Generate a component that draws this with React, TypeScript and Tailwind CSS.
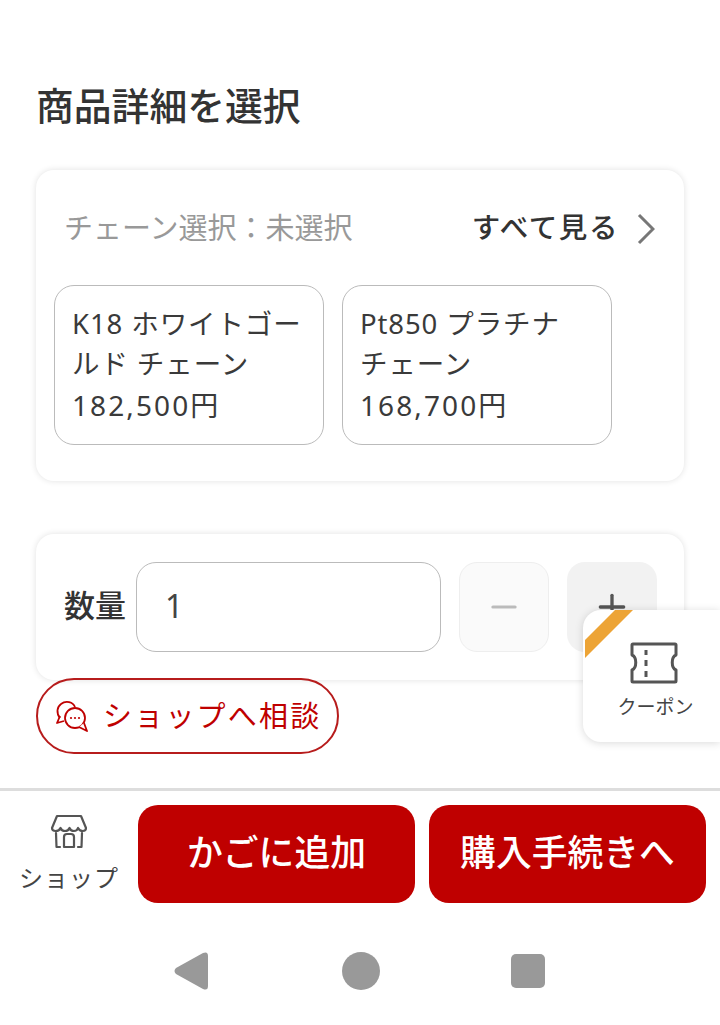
import { Minus, Plus } from "lucide-react";

const chains = [
  { lines: ["K18 ホワイトゴー", "ルド チェーン"], price: "182,500円" },
  { lines: ["Pt850 プラチナ", "チェーン"], price: "168,700円" },
];

function ConsultIcon() {
  return (
    <svg width="34" height="34" viewBox="0 0 34 34" fill="none" stroke="#bf0000" strokeWidth="1.800">
      <path d="M5 19 C1 14 2 8 6 5 C11 1 18 3 20 8" />
      <path d="M5 17 L2 24 L9 22" strokeLinejoin="round" />
      <circle cx="20" cy="19" r="10" fill="#fff" />
      <path d="M24 28 L32 32 L29 24" fill="#fff" strokeLinejoin="round" />
      <g fill="#bf0000" stroke="none">
        <circle cx="16" cy="19" r="1.100" />
        <circle cx="20" cy="19" r="1.100" />
        <circle cx="24" cy="19" r="1.100" />
      </g>
    </svg>
  );
}

function ShopIcon() {
  return (
    <svg width="38" height="38" viewBox="0 0 38 38" fill="none" stroke="#555" strokeWidth="2.200" strokeLinecap="round" strokeLinejoin="round">
      <path d="M7 3 H31 L36 15 C36 19 30 19 28 15 C27 19 21 19 19.500 15 C18 19 12 19 10.500 15 C9 19 2 19 2 15 Z" />
      <path d="M6 20 L6.500 34 H10 M32 20 L31.500 34 H28" />
      <path d="M14 34 V24 Q14 21 17 21 H21 Q24 21 24 24 V34 Z" />
    </svg>
  );
}

function CouponIcon() {
  return (
    <svg width="48" height="42" viewBox="0 0 48 42" fill="none" stroke="#555" strokeWidth="3">
      <path d="M3 2 H45 Q46 2 46 3 V13 C41 15 41 26 46 28 V39 Q46 40 45 40 H3 Q2 40 2 39 V28 C7 26 7 15 2 13 V3 Q2 2 3 2 Z" strokeLinejoin="round" />
      <path d="M16 8 V13 M16 18 V24 M16 29 V35" />
    </svg>
  );
}

export default function App() {
  return (
    <div className="relative flex h-[1025px] w-[720px] flex-col overflow-hidden bg-white font-['Roboto','Noto_Sans_CJK_JP',sans-serif] text-[#333]">
      <h1 className="mt-[79px] pl-[36px] text-[37.800px] leading-[56px] font-medium">商品詳細を選択</h1>

      <section className="mx-9 mt-[35px] h-[311px] rounded-[18px] bg-white shadow-[0_0_6px_rgba(0,0,0,0.12)]">
        <div className="flex items-center justify-between pt-[37px] pr-[29px] pl-[28px]">
          <span className="text-[29px] leading-[44px] text-[#999]">チェーン選択：未選択</span>
          <span className="flex items-center gap-[18px] text-[28.500px] leading-[44px] font-medium tracking-[1.600px]">
            すべて見る
            <svg width="18" height="32" viewBox="0 0 18 32" fill="none" stroke="#777" strokeWidth="3">
              <path d="M2 2 L16 16 L2 30" />
            </svg>
          </span>
        </div>
        <div className="mt-[34px] flex gap-[18px] pl-[18px]">
          {chains.map((c) => (
            <div key={c.price} className="h-40 w-[270px] rounded-[20px] border border-[#bbb] px-[17px] pt-[19px] font-['Noto_Sans','Noto_Sans_CJK_JP',sans-serif] text-[#3a3a3a]">
              {c.lines.map((l) => (
                <p key={l} className="h-[40px] text-[27.500px] leading-[38px] tracking-[0.900px]">{l}</p>
              ))}
              <p className="h-[40px] text-[28px] leading-[40px] tracking-[2.100px]">{c.price}</p>
            </div>
          ))}
        </div>
      </section>

      <section className="mx-9 mt-[53px] flex h-[146px] items-center rounded-[18px] bg-white pr-[27px] pl-[28px] shadow-[0_0_6px_rgba(0,0,0,0.12)]">
        <span className="w-[72px] text-[31px] font-medium">数量</span>
        <div className="flex h-[90px] w-[305px] items-center rounded-[20px] border border-[#bbb] pb-[2px] pl-[28px] font-['Noto_Sans',sans-serif] text-[32px] text-[#444]">1</div>
        <button className="ml-[18px] flex size-[90px] items-center justify-center rounded-[18px] border border-[#eee] bg-[#fafafa]">
          <Minus size={38} strokeWidth={2} className="text-[#bbb]" />
        </button>
        <button className="ml-[18px] flex size-[90px] items-center justify-center rounded-[18px] bg-[#f2f2f2]">
          <Plus size={40} strokeWidth={2} className="text-[#555]" />
        </button>
      </section>

      <button className="-mt-[2px] ml-9 flex h-[76px] w-[303px] items-center rounded-full border-2 border-[#b71c1c] pl-[17px] text-[29px] tracking-[2.200px] text-[#bf0000]">
        <ConsultIcon />
        <span className="mt-[3px] ml-[14px]">ショップへ相談</span>
      </button>

      <div className="mt-[34px] h-[3px] bg-[#ddd]" />

      <footer className="flex h-[112px] items-start pt-[14px] pr-[14px]">
        <div className="flex w-[138px] flex-col items-center pt-[8px]">
          <ShopIcon />
          <span className="mt-[12px] text-[24px] leading-[32px] tracking-[1px] text-[#444]">ショップ</span>
        </div>
        <button className="h-[98px] w-[277px] rounded-[20px] bg-[#bf0000] pt-[2px] text-[35.800px] font-medium text-white">かごに追加</button>
        <button className="ml-[14px] h-[98px] w-[277px] rounded-[20px] bg-[#bf0000] pt-[2px] text-[35.800px] font-medium text-white">購入手続きへ</button>
      </footer>

      <nav className="flex items-center pt-[49px] pl-[174px]">
        <svg width="36" height="38" viewBox="0 0 36 38" fill="#999">
          <path d="M2 16 L29 1 Q34 -1 34 4 V34 Q34 39 29 37 L2 22 Q-1 19 2 16 Z" />
        </svg>
        <span className="ml-[132px] size-[38px] rounded-full bg-[#999]" />
        <span className="ml-[131px] size-[34px] rounded-[5px] bg-[#999]" />
      </nav>

      <aside className="absolute top-[610px] left-[583px] flex h-[132px] w-[137px] flex-col items-center overflow-hidden rounded-l-[18px] bg-white pt-[32px] shadow-[0_1px_8px_rgba(0,0,0,0.15)]">
        <span className="absolute top-0 left-[2px] h-[48px] w-[48px] bg-[#eda436] [clip-path:polygon(30px_0,48px_0,0_48px,0_30px)]" />
        <span className="ml-[4px] flex">
          <CouponIcon />
        </span>
        <span className="mt-[10px] ml-[8px] text-[19px] leading-[28px] text-[#444]">クーポン</span>
      </aside>
    </div>
  );
}
